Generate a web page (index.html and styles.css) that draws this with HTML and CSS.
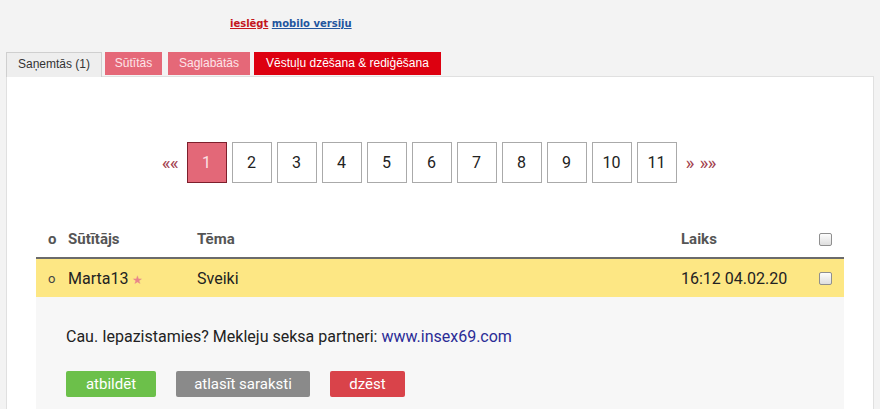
FILE: index.html
```html
<!DOCTYPE html>
<html lang="lv">

<head>
    <meta charset="UTF-8">
    <meta name="viewport" content="width=device-width, initial-scale=1.0">
    <title>Vēstules</title>
    <link rel="stylesheet" href="styles.css">
</head>

<body>
    <div class="mobile-link">
        <a href="#" class="on">ieslēgt</a> <a href="#" class="mob">mobilo versiju</a>
    </div>

    <div class="tabs">
        <a href="#" class="tab active">Saņemtās (1)</a>
        <a href="#" class="tab pink sent">Sūtītās</a>
        <a href="#" class="tab pink saved">Saglabātās</a>
        <a href="#" class="tab red">Vēstuļu dzēšana &amp; rediģēšana</a>
    </div>

    <div class="panel">
        <div class="pager">
            <a href="#" class="arrow first">««</a>
            <a href="#" class="page current">1</a>
            <a href="#" class="page">2</a>
            <a href="#" class="page">3</a>
            <a href="#" class="page">4</a>
            <a href="#" class="page">5</a>
            <a href="#" class="page">6</a>
            <a href="#" class="page">7</a>
            <a href="#" class="page">8</a>
            <a href="#" class="page">9</a>
            <a href="#" class="page">10</a>
            <a href="#" class="page">11</a>
            <a href="#" class="arrow next">»</a>
            <a href="#" class="arrow last">»»</a>
        </div>

        <div class="mail">
            <div class="row head">
                <div class="c-dot">o</div>
                <div>Sūtītājs</div>
                <div>Tēma</div>
                <div>Laiks</div>
                <div class="c-check"><input type="checkbox"></div>
            </div>
            <div class="row unread">
                <div class="c-dot">o</div>
                <div>Marta13 <span class="star">★</span></div>
                <div>Sveiki</div>
                <div>16:12 04.02.20</div>
                <div class="c-check"><input type="checkbox"></div>
            </div>
            <div class="open-msg">
                <p class="msg-text">Cau. Iepazistamies? Mekleju seksa partneri: <a href="#">www.insex69.com</a></p>
                <div class="actions">
                    <button class="btn green">atbildēt</button>
                    <button class="btn grey">atlasīt saraksti</button>
                    <button class="btn danger">dzēst</button>
                </div>
            </div>
        </div>
    </div>
</body>

</html>
```

FILE: styles.css
```css
body {
    margin: 0;
    background: #f3f3f3;
    font-family: Roboto, Arial, sans-serif;
    color: #222;
}

.mobile-link {
    padding: 18px 0 0 230px;
    height: 52px;
    box-sizing: border-box;
    font-family: "DejaVu Sans", Verdana, sans-serif;
    font-size: 10px;
    font-weight: bold;
}

.mobile-link a {
    text-decoration: underline;
}

.mobile-link .on {
    color: #c4161c;
}

.mobile-link .mob {
    color: #23559e;
}

.tabs {
    display: flex;
    align-items: flex-start;
    margin-left: 6px;
    height: 24px;
    position: relative;
    z-index: 1;
}

.tab {
    display: block;
    height: 23px;
    line-height: 23px;
    margin-right: 4px;
    text-align: center;
    font-family: "Liberation Sans", Arial, sans-serif;
    font-size: 12px;
    text-decoration: none;
    color: #fff;
    box-sizing: border-box;
}

.tab.active {
    width: 96px;
    height: 25px;
    background: #eeeeee;
    border: 1px solid #cfcfcf;
    border-bottom: none;
    color: #333;
    margin-right: 3px;
}

.tab.pink {
    background: #e56878;
    color: #fde4e8;
}

.tab.sent {
    width: 57px;
    margin-right: 6px;
}

.tab.saved {
    width: 82px;
}

.tab.red {
    width: 187px;
    background: #dd0010;
    color: #fff;
}

.panel {
    margin: 0 6px;
    background: #fff;
    border: 1px solid #e0e0e0;
    border-bottom: none;
    padding: 65px 29px 0;
    height: 400px;
}

.pager {
    display: flex;
    justify-content: center;
    align-items: center;
    gap: 5px;
    margin-right: 3px;
}

.page {
    width: 40px;
    height: 41px;
    box-sizing: border-box;
    border: 1px solid #aaaaaa;
    background: #fff;
    color: #222;
    font-size: 16px;
    display: flex;
    align-items: center;
    justify-content: center;
    text-decoration: none;
}

.page.current {
    background: #e36878;
    border-color: #7d1f2c;
    color: #fbe0e4;
}

.arrow {
    color: #a3434f;
    font-size: 19px;
    text-decoration: none;
}

.arrow.first {
    margin-right: 4px;
    letter-spacing: -1px;
}

.arrow.next {
    margin-left: 4px;
}

.arrow.last {
    letter-spacing: -1px;
}

.mail {
    margin-top: 38px;
}

.row {
    display: grid;
    grid-template-columns: 32px 129px 1fr 138px 25px;
    align-items: center;
}

.row.head {
    height: 36px;
    border-bottom: 2px solid #6b6b6b;
    font-weight: bold;
    font-size: 15px;
    color: #555;
}

.row.unread {
    height: 38px;
    background: #fde784;
    font-size: 16px;
}

.c-dot {
    padding-left: 12px;
}

.row.unread .c-dot {
    font-size: 13px;
    color: #444;
}

.c-check input {
    appearance: none;
    display: block;
    margin: 0;
    width: 13px;
    height: 13px;
    border: 1px solid #8f8f8f;
    border-radius: 2px;
    background: linear-gradient(#fdfdfd, #dedede);
}

.star {
    font-size: 12px;
    color: #e8868a;
}

.open-msg {
    background: #f7f7f7;
    padding: 30px 30px 20px;
    height: 200px;
}

.msg-text {
    margin: 0 0 25px;
    font-size: 16px;
    color: #222;
}

.msg-text a {
    color: #2b2c96;
    text-decoration: none;
}

.actions {
    display: flex;
    gap: 20px;
}

.btn {
    height: 26px;
    padding: 0;
    border: none;
    border-radius: 2px;
    font-family: Roboto, Arial, sans-serif;
    font-size: 15px;
    color: #fff;
}

.btn.green {
    width: 90px;
    background: #6cc04a;
}

.btn.grey {
    width: 134px;
    background: #8a8a8a;
}

.btn.danger {
    width: 75px;
    background: #d9434a;
}
```
